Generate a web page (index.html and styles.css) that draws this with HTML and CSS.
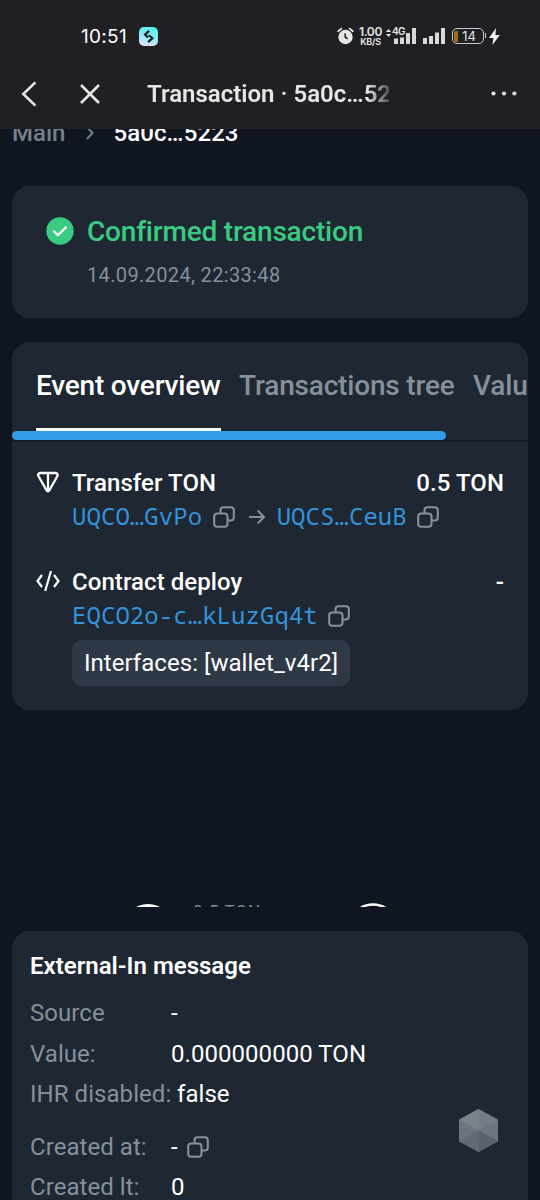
FILE: index.html
```html
<!DOCTYPE html>
<html lang="en">
<head>
<meta charset="utf-8">
<title>Transaction</title>
<link rel="stylesheet" href="styles.css">
</head>
<body>
<svg class="defs" width="0" height="0">
  <symbol id="copy" viewBox="0 0 22 22"><g fill="none" stroke="currentColor" stroke-width="2.1"><rect x="1.2" y="7.5" width="13.3" height="13.3" rx="3"/><path d="M7.5 7.3V4.2a3 3 0 0 1 3-3h7.3a3 3 0 0 1 3 3v7.3a3 3 0 0 1-3 3h-3.1"/></g></symbol>
</svg>
<div class="screen">
  <header class="header">
    <div class="status">
      <span class="clock">10:51</span>
      <svg class="app-badge" width="19" height="19" viewBox="0 0 19 19"><defs><linearGradient id="badge" x1=".6" y1="0" x2=".3" y2="1"><stop offset="0" stop-color="#58eeee"/><stop offset=".5" stop-color="#8deaf3"/><stop offset="1" stop-color="#e6e2ff"/></linearGradient></defs><rect width="19" height="19" rx="5" fill="url(#badge)"/><path d="M10.1 3.900 6 7.600l3 3M9.800 8.300l3.600 2.900-4.300 3.900" fill="none" stroke="#102022" stroke-width="2.1"/></svg>
      <div class="status-right">
        <svg class="alarm" width="17" height="18" viewBox="0 0 17 18"><circle cx="8.5" cy="10" r="7.2" fill="#e6e6e7"/><path d="M1.2 4.2 4.3 1.6M15.8 4.2l-3.1-2.6" stroke="#e6e6e7" stroke-width="1.8" stroke-linecap="round"/><path d="M8.2 6.5V10l2.4 1.9" fill="none" stroke="#202024" stroke-width="1.6"/></svg>
        <div class="speed"><b>1.00</b><span>KB/S</span></div>
        <div class="cell">
          <svg class="updown" width="5" height="8" viewBox="0 0 5 8"><path d="M0 3 2.5 0 5 3zM0 5l2.5 3L5 5z" fill="#e6e6e7"/></svg>
          <span class="gen">4G</span>
          <svg class="bars" width="22" height="16" viewBox="0 0 22 16"><path d="M0 10.500h4V16H0zM6 9.500h4V16H6zM12 5h4v11h-4zM18 0h4v16h-4z" fill="#d8d8d9"/></svg>
        </div>
        <svg class="bars2" width="22" height="16" viewBox="0 0 22 16"><path d="M0 10h4v6H0zM6 8h4v8H6zM12 4.5h4V16h-4zM18 0h4v16h-4z" fill="#d8d8d9"/></svg>
        <div class="battery"><i></i><span>14</span></div>
        <svg class="bolt" width="11" height="17" viewBox="0 0 11 17"><path d="M7 0 0 10h4.4L3.4 17 10.8 7H6.4z" fill="#f2f2f2"/></svg>
      </div>
    </div>
    <div class="nav">
      <svg class="back" width="16" height="26" viewBox="0 0 16 26"><path d="M14.4 1.4 2.3 13l12.1 11.6" fill="none" stroke="#e6e6e7" stroke-width="2.6"/></svg>
      <svg class="close" width="20" height="20" viewBox="0 0 20 20"><path d="m1 1 18 18M19 1 1 19" stroke="#e6e6e7" stroke-width="2.6"/></svg>
      <div class="nav-title">Transaction · 5a0c…52</div>
      <svg class="more" width="26" height="5" viewBox="0 0 26 5"><g fill="#e6e6e7"><circle cx="2.5" cy="2.5" r="2.1"/><circle cx="13" cy="2.5" r="2.1"/><circle cx="23.4" cy="2.5" r="2.1"/></g></svg>
    </div>
  </header>
  <main class="content">
    <nav class="crumbs"><span>Main</span><svg width="10" height="14" viewBox="0 0 10 14"><path d="m2 1 5.5 6L2 13" fill="none" stroke="#76808c" stroke-width="2"/></svg><b>5a0c…5223</b></nav>
    <section class="card summary">
      <svg width="28" height="28" viewBox="0 0 28 28"><circle cx="14" cy="14" r="13.7" fill="#3acb82"/><path d="m8.2 14.5 3.7 3.7 7.9-7.8" fill="none" stroke="#fff" stroke-width="2.2" stroke-linecap="round" stroke-linejoin="round"/></svg>
      <div><h1>Confirmed transaction</h1><p>14.09.2024, 22:33:48</p></div>
    </section>
    <section class="card events">
      <div class="tabs"><span class="tab active">Event overview</span><span class="tab">Transactions tree</span><span class="tab">Value flow</span></div>
      <div class="scroll"><div class="thumb"></div></div>
      <div class="event">
        <svg class="ton" width="24" height="24" viewBox="0 0 24 24"><path d="M4.2 3h15.4c1.7 0 2.6 1.6 1.8 3L13.3 20.5c-.6 1.1-2.1 1.1-2.7 0L2.4 6C1.6 4.600 2.500 3 4.200 3zM12 3v18" fill="none" stroke="#fff" stroke-width="2.300"/></svg>
        <div class="event-body">
          <div class="event-head"><span>Transfer TON</span><span>0.5 TON</span></div>
          <div class="addr"><a>UQCO…GvPo</a><svg class="copy"><use href="#copy"/></svg><svg class="arrow" width="18" height="16" viewBox="0 0 18 16"><path d="M1 8h15M9.700 1.500 16 8l-6.300 6.500" fill="none" stroke="#87909b" stroke-width="2"/></svg><a>UQCS…CeuB</a><svg class="copy"><use href="#copy"/></svg></div>
        </div>
      </div>
      <div class="event second">
        <svg class="code" width="26" height="24" viewBox="0 0 26 24"><path d="M6 6 1.500 12 6 18M18 6l4.500 6L18 18M15 2 9.200 22" fill="none" stroke="#fff" stroke-width="2.200"/></svg>
        <div class="event-body">
          <div class="event-head"><span>Contract deploy</span><span>-</span></div>
          <div class="addr"><a>EQCO2o-c…kLuzGq4t</a><svg class="copy"><use href="#copy"/></svg></div>
          <div class="chip">Interfaces: [wallet_v4r2]</div>
        </div>
      </div>
    </section>
    <div class="graph">
      <svg width="28" height="4" viewBox="0 0 28 4"><circle cx="14" cy="25" r="24" fill="#fff"/></svg>
      <span class="edge">0.5 TON</span>
      <svg width="28" height="4" viewBox="0 0 28 4"><circle cx="14" cy="25" r="23.500" fill="#10161f" stroke="#fff" stroke-width="2.500"/></svg>
    </div>
    <section class="card message">
      <h2>External-In message</h2>
      <dl>
        <dt>Source</dt><dd>-</dd>
        <dt>Value:</dt><dd>0.000000000 TON</dd>
        <dt>IHR disabled:</dt><dd class="near">false</dd>
        <dt class="gap">Created at:</dt><dd class="gap">-<svg class="copy"><use href="#copy"/></svg></dd>
        <dt>Created lt:</dt><dd>0</dd>
      </dl>
    </section>
    <svg class="hexagon" width="40" height="44" viewBox="0 0 40 44"><path d="M20 0 40 11v22L20 44 0 33V11z" fill="#6d747d"/><path d="M20 22 0 11 20 0z" fill="#7a828a"/><path d="m20 22 20-11L20 0z" fill="#747c85"/><path d="M20 22 0 33l20 11z" fill="#636a75"/><path d="m20 22 20 11-20 11z" fill="#5b616d"/></svg>
  </main>
</div>
</body>
</html>
```

FILE: styles.css
```css
* { box-sizing: border-box; }
body { margin: 0; background: #10161f; color: #fff; font-family: Roboto, sans-serif; font-size: 24px; line-height: 28px; }
svg { display: block; flex: none; }
.defs { position: absolute; }
.screen { position: relative; width: 540px; height: 1200px; overflow: hidden; display: flex; flex-direction: column; }
.header { height: 129px; flex: none; background: #202024; color: #e6e6e7; }
.status { height: 58px; padding: 14px 40px 0 81px; display: flex; align-items: center; }
.clock { font: 400 19px/20px Inter, sans-serif; color: #fff; width: 58px; padding-top: 1px; letter-spacing: .3px; }
.status-right { margin-left: auto; display: flex; align-items: center; }
.speed { width: 25px; margin-left: 4px; display: flex; flex-direction: column; align-items: center; font: 600 12px/11px Inter, sans-serif; letter-spacing: -.3px; }
.speed b { font-weight: 600; }
.speed span { font-size: 9px; line-height: 9px; letter-spacing: -.2px; }
.cell { display: flex; align-items: flex-start; margin-left: 3px; width: 32px; height: 18px; position: relative; }
.updown { margin: 2px 1px 0 0; }
.gen { font: 600 10px/10px Inter, sans-serif; letter-spacing: -.6px; margin-top: -1px; }
.bars { position: absolute; left: 8px; top: 1px; }
.bars2 { margin-left: 5px; }
.battery { position: relative; width: 32px; height: 16px; margin-left: 7px; border: 1.5px solid #c9c9ca; border-radius: 5px; font: 13px/12px Inter, sans-serif; text-align: center; display: flex; align-items: center; padding: 1px; }
.battery::after { content: ""; position: absolute; right: -3px; top: 4px; width: 1.5px; height: 5px; background: #c9c9ca; }
.battery i { width: 4px; height: 11px; background: #a36e17; border-radius: 2px 0 0 2px; }
.battery span { flex: 1; padding-right: 2px; }
.bolt { margin-left: 5px; }
.nav { height: 71px; display: flex; align-items: center; padding: 0 23px 0 21px; }
.close { margin-left: 43px; }
.nav-title { margin-left: 47px; width: 242px; font-weight: 600; font-size: 24px; white-space: nowrap; overflow: hidden; -webkit-mask-image: linear-gradient(90deg, #000 220px, transparent 250px); mask-image: linear-gradient(90deg, #000 220px, transparent 250px); }
.more { margin-left: auto; }
.content { flex: 1; min-height: 0; overflow: hidden; display: flex; flex-direction: column; padding: 0 12px; }
.crumbs { margin-top: -10px; height: 28px; flex: none; display: flex; align-items: center; color: #76808c; font-weight: 500; }
.crumbs svg { margin: 0 18px 0 20px; }
.crumbs b { color: #fff; font-weight: 500; letter-spacing: .1px; }
.card { background: #1e2732; border-radius: 18px; flex: none; overflow: hidden; }
.summary { height: 132px; margin-top: 39px; padding: 31px 34px; display: flex; gap: 13px; }
h1 { margin: 0; font-size: 28px; line-height: 30px; font-weight: 500; color: #3acb82; letter-spacing: -.2px; }
.summary p { margin: 16px 0 0; font-size: 20px; line-height: 24px; color: #87909b; letter-spacing: .35px; }
.events { height: 368px; margin-top: 24px; }
.tabs { height: 89px; padding: 0 24px; display: flex; gap: 18.5px; font-size: 28px; font-weight: 500; white-space: nowrap; color: #87909b; letter-spacing: -.2px; }
.tab { padding-top: 30px; flex: none; }
.tab:nth-child(2) { letter-spacing: -.18px; }
.active { color: #fff; border-bottom: 3px solid #fff; }
.scroll { height: 11px; border-bottom: 2px solid #151d27; }
.thumb { width: 434px; height: 9px; border-radius: 5px; background: #319be8; }
.event { display: flex; margin: 27px 24px 0; }
.event-body { flex: 1; margin-left: 12px; min-width: 0; }
.event-head { display: flex; justify-content: space-between; font-weight: 500; letter-spacing: .07px; }
.ton { margin-top: 1px; }
.code { margin: 1px -2px 0 0; }
.addr { display: flex; align-items: center; height: 32px; margin-top: 4px; font-family: "Noto Sans Mono", "DejaVu Sans Mono", monospace; font-size: 24px; color: #3393db; letter-spacing: .06px; }
.addr a { margin-top: -2px; }
.copy { width: 22px; height: 22px; margin-left: 10.5px; color: #87909b; }
.arrow { margin: 0 11px 0 13px; }
.second { margin-top: 35px; }
.chip { margin-top: 8px; width: 278px; height: 46px; line-height: 46px; padding-left: 12px; border-radius: 10px; background: #2e3846; white-space: nowrap; letter-spacing: .04px; }
.graph { height: 197px; flex: none; overflow: hidden; display: flex; align-items: flex-start; padding: 193px 0 0 122px; }
.edge { color: #87909b; font-size: 17px; line-height: 20px; margin: -2px 0 0 31px; width: 166px; letter-spacing: 1px; }
.message { margin-top: 24px; height: 300px; padding: 21px 18px; }
h2 { margin: 0; font-size: 24px; line-height: 28px; font-weight: 600; }
dl { margin: 19px 0 0; display: grid; grid-template-columns: 141px 1fr; row-gap: 12.5px; letter-spacing: .05px; }
dt { color: #87909b; white-space: nowrap; }
dd { margin: 0; display: flex; align-items: center; }
dd .copy { margin-left: 9.5px; }
.near { padding-left: 6px; }
.gap { margin-top: 12px; }
.hexagon { position: absolute; left: 459px; top: 1109px; width: 39px; height: 43px; }
```
